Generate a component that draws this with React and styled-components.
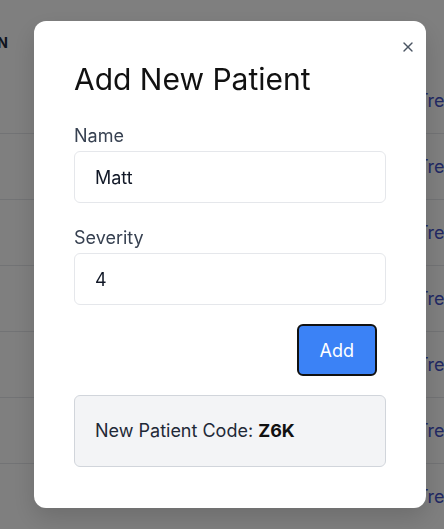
import styled, { createGlobalStyle } from "styled-components";
import { X } from "lucide-react";

const GlobalStyle = createGlobalStyle`
    html, body {
        margin: 0;
        padding: 0;
        background: #ffffff;
        overflow: hidden;
    }
    body {
        font-family: Inter, "Noto Sans", "Liberation Sans", sans-serif;
    }
    * {
        box-sizing: border-box;
    }
`;

const rows = ["Treat", "Treat", "Treat", "Treat", "Treat", "Treat", "Treat"];

function App() {
    return (
        <>
            <GlobalStyle />
            <Page>
                <HeaderRow>
                    <HeaderCell>ACTION</HeaderCell>
                </HeaderRow>
                {rows.map((label, i) => (
                    <Row key={i}>
                        <Cell />
                        <LinkCell>{label}</LinkCell>
                    </Row>
                ))}
            </Page>
            <Overlay>
                <Modal>
                    <Close aria-label="close">
                        <X size={16} strokeWidth={2} />
                    </Close>
                    <Title>Add New Patient</Title>
                    <Label>Name</Label>
                    <Input defaultValue="Matt" />
                    <Label $spaced>Severity</Label>
                    <Input defaultValue="4" />
                    <Actions>
                        <Button>Add</Button>
                    </Actions>
                    <CodeBox>
                        New Patient Code: <strong>Z6K</strong>
                    </CodeBox>
                </Modal>
            </Overlay>
        </>
    );
}

const Page = styled.div`
    width: 444px;
    height: 529px;
    overflow: hidden;
`;

const HeaderRow = styled.div`
    height: 68px;
    padding-top: 34px;
    display: flex;
    justify-content: flex-start;
    overflow: hidden;
`;

const HeaderCell = styled.div`
    font-size: 14px;
    line-height: 18px;
    font-weight: 700;
    color: #1e293b;
    margin-left: -47px;
`;

const Row = styled.div`
    height: 66px;
    display: grid;
    grid-template-columns: 1fr 27px;
    align-items: center;
    border-bottom: 1px solid #e5e7eb;
    overflow: hidden;
`;

const Cell = styled.div``;

const LinkCell = styled.a`
    font-size: 18px;
    line-height: 28px;
    color: #4353c9;
    white-space: nowrap;
`;

const Overlay = styled.div`
    position: fixed;
    inset: 0;
    background: rgba(0, 0, 0, 0.5);
    display: flex;
    align-items: center;
    justify-content: center;
    padding-left: 16px;
`;

const Modal = styled.div`
    position: relative;
    width: 392px;
    background: #ffffff;
    border-radius: 12px;
    padding: 40px 40px 41px;
    display: flex;
    flex-direction: column;
    box-shadow: 0 10px 25px rgba(0, 0, 0, 0.15);
`;

const Close = styled.button`
    position: absolute;
    top: 18px;
    right: 10px;
    width: 16px;
    height: 16px;
    padding: 0;
    border: none;
    background: none;
    color: #4b5563;
    display: flex;
    cursor: pointer;
`;

const Title = styled.h2`
    margin: 0 0 25px;
    font-size: 30px;
    line-height: 36px;
    font-weight: 400;
    color: #111111;
`;

const Label = styled.label`
    font-size: 18px;
    line-height: 28px;
    color: #374151;
    margin-top: ${(p) => (p.$spaced ? "21px" : "0")};
`;

const Input = styled.input`
    margin-top: 1px;
    height: 52px;
    padding: 0 20px;
    border: 1px solid #e5e7eb;
    border-radius: 6px;
    font-family: inherit;
    font-size: 18px;
    color: #111827;
    outline: none;
`;

const Actions = styled.div`
    display: flex;
    justify-content: flex-end;
    margin-top: 19px;
    padding-right: 9px;
`;

const Button = styled.button`
    height: 52px;
    padding: 0 21px;
    background: #3b82f6;
    color: #ffffff;
    border: 2px solid #111111;
    border-radius: 6px;
    font-family: inherit;
    font-size: 18px;
    cursor: pointer;

    :focus {
        outline: none;
    }
`;

const CodeBox = styled.div`
    margin-top: 19px;
    padding: 20px 20px 21px;
    line-height: 29px;
    font-size: 18px;
    color: #1f2937;
    background: #f3f4f6;
    border: 1px solid #d1d5db;
    border-radius: 6px;

    strong {
        font-weight: 700;
        color: #111111;
    }
`;

export default App;
